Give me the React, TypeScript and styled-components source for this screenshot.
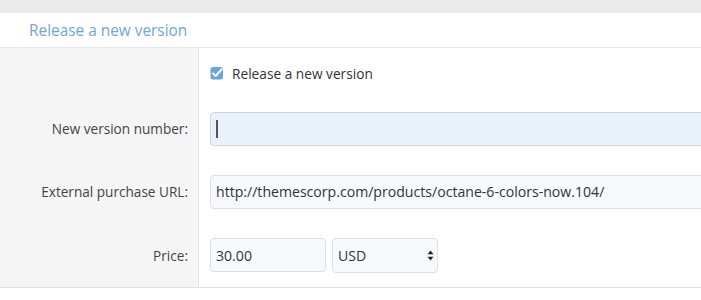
import React from "react";
import styled, { createGlobalStyle } from "styled-components";

const Global = createGlobalStyle`
  html, body { margin: 0; padding: 0; background: #fff; }
  body { font-family: "Open Sans", "Noto Sans", Arial, sans-serif; color: #333; }
  * { box-sizing: border-box; }
`;

const Page = styled.div`
  width: 701px;
  height: 300px;
  overflow: hidden;
  background: #fff;
`;

const TopBand = styled.div`
  height: 13px;
  background: #ebebeb;
`;

const Header = styled.div`
  height: 35px;
  display: flex;
  align-items: center;
  padding-left: 29px;
  border-bottom: 1px solid #e6e6e6;
  font-size: 15.4px;
  color: #6fa6d6;
`;

const Form = styled.div`
  border-bottom: 1px solid #e2e2e2;
`;

const Row = styled.div<{ $h: number }>`
  display: grid;
  grid-template-columns: 199px 1fr;
  height: ${(p) => p.$h}px;
`;

const Label = styled.div`
  background: #f5f5f5;
  border-right: 1px solid #e4e4e4;
  display: flex;
  align-items: center;
  justify-content: flex-end;
  padding-right: 10px;
  font-size: 13.6px;
  color: #444;
`;

const Field = styled.div`
  display: flex;
  align-items: center;
  gap: 6px;
  padding-left: 11px;
  min-width: 0;
`;

const CheckLabel = styled.label`
  display: flex;
  align-items: center;
  gap: 8px;
  font-size: 13.7px;
  color: #333;
  margin-top: 1px;
`;

const InputWrap = styled.div<{ $w?: number }>`
  position: relative;
  flex: ${(p) => (p.$w ? "0 0 auto" : "1 1 auto")};
  width: ${(p) => (p.$w ? `${p.$w}px` : "auto")};
  margin-right: ${(p) => (p.$w ? "0" : "-10px")};
`;

const TextInput = styled.input<{ $focus?: boolean }>`
  width: 100%;
  height: 34px;
  border: 1px solid ${(p) => (p.$focus ? "#cdd6df" : "#dcdfe2")};
  border-radius: 4px;
  background: ${(p) => (p.$focus ? "#e9f1fb" : "#f7fafd")};
  padding: 0 5px;
  font-family: inherit;
  font-size: 14.1px;
  color: #333;
  outline: none;
`;

const Caret = styled.span`
  position: absolute;
  left: 6px;
  top: 8px;
  width: 1.5px;
  height: 18px;
  background: #555;
`;

const Select = styled.select`
  appearance: none;
  -webkit-appearance: none;
  width: 100%;
  height: 35px;
  border: 1px solid #dcdfe2;
  border-radius: 4px;
  background: #f7fafd;
  padding: 0 5px;
  font-family: inherit;
  font-size: 14.1px;
  color: #333;
  outline: none;
`;

const Arrows = styled.svg`
  position: absolute;
  right: 4px;
  top: 12px;
  pointer-events: none;
`;

export default function App() {
  return (
    <Page>
      <Global />
      <TopBand />
      <Header>Release a new version</Header>
      <Form>
        <Row $h={49}>
          <Label />
          <Field>
            <CheckLabel>
              <svg width="14" height="14" viewBox="0 0 14 14">
                <rect x="0.5" y="1" width="12.5" height="12.5" rx="2.5" fill="#6aa5da" />
                <path d="M3 7.4 L5.7 10 L11.8 3.2" stroke="#fff" strokeWidth="2" fill="none" strokeLinecap="round" strokeLinejoin="round" />
              </svg>
              Release a new version
            </CheckLabel>
          </Field>
        </Row>
        <Row $h={63}>
          <Label>New version number:</Label>
          <Field>
            <InputWrap>
              <TextInput $focus defaultValue="" />
              <Caret />
            </InputWrap>
          </Field>
        </Row>
        <Row $h={63}>
          <Label>External purchase URL:</Label>
          <Field>
            <InputWrap>
              <TextInput defaultValue="http://themescorp.com/products/octane-6-colors-now.104/" />
            </InputWrap>
          </Field>
        </Row>
        <Row $h={64}>
          <Label>Price:</Label>
          <Field>
            <InputWrap $w={116}>
              <TextInput defaultValue="30.00" />
            </InputWrap>
            <InputWrap $w={106}>
              <Select defaultValue="USD">
                <option>USD</option>
                <option>EUR</option>
                <option>GBP</option>
              </Select>
              <Arrows width="7" height="11" viewBox="0 0 7 11">
                <path d="M3.5 0.5 L6.5 4.3 L0.5 4.3 Z" fill="#222" />
                <path d="M3.5 10.5 L6.5 6.7 L0.5 6.7 Z" fill="#222" />
              </Arrows>
            </InputWrap>
          </Field>
        </Row>
      </Form>
    </Page>
  );
}
